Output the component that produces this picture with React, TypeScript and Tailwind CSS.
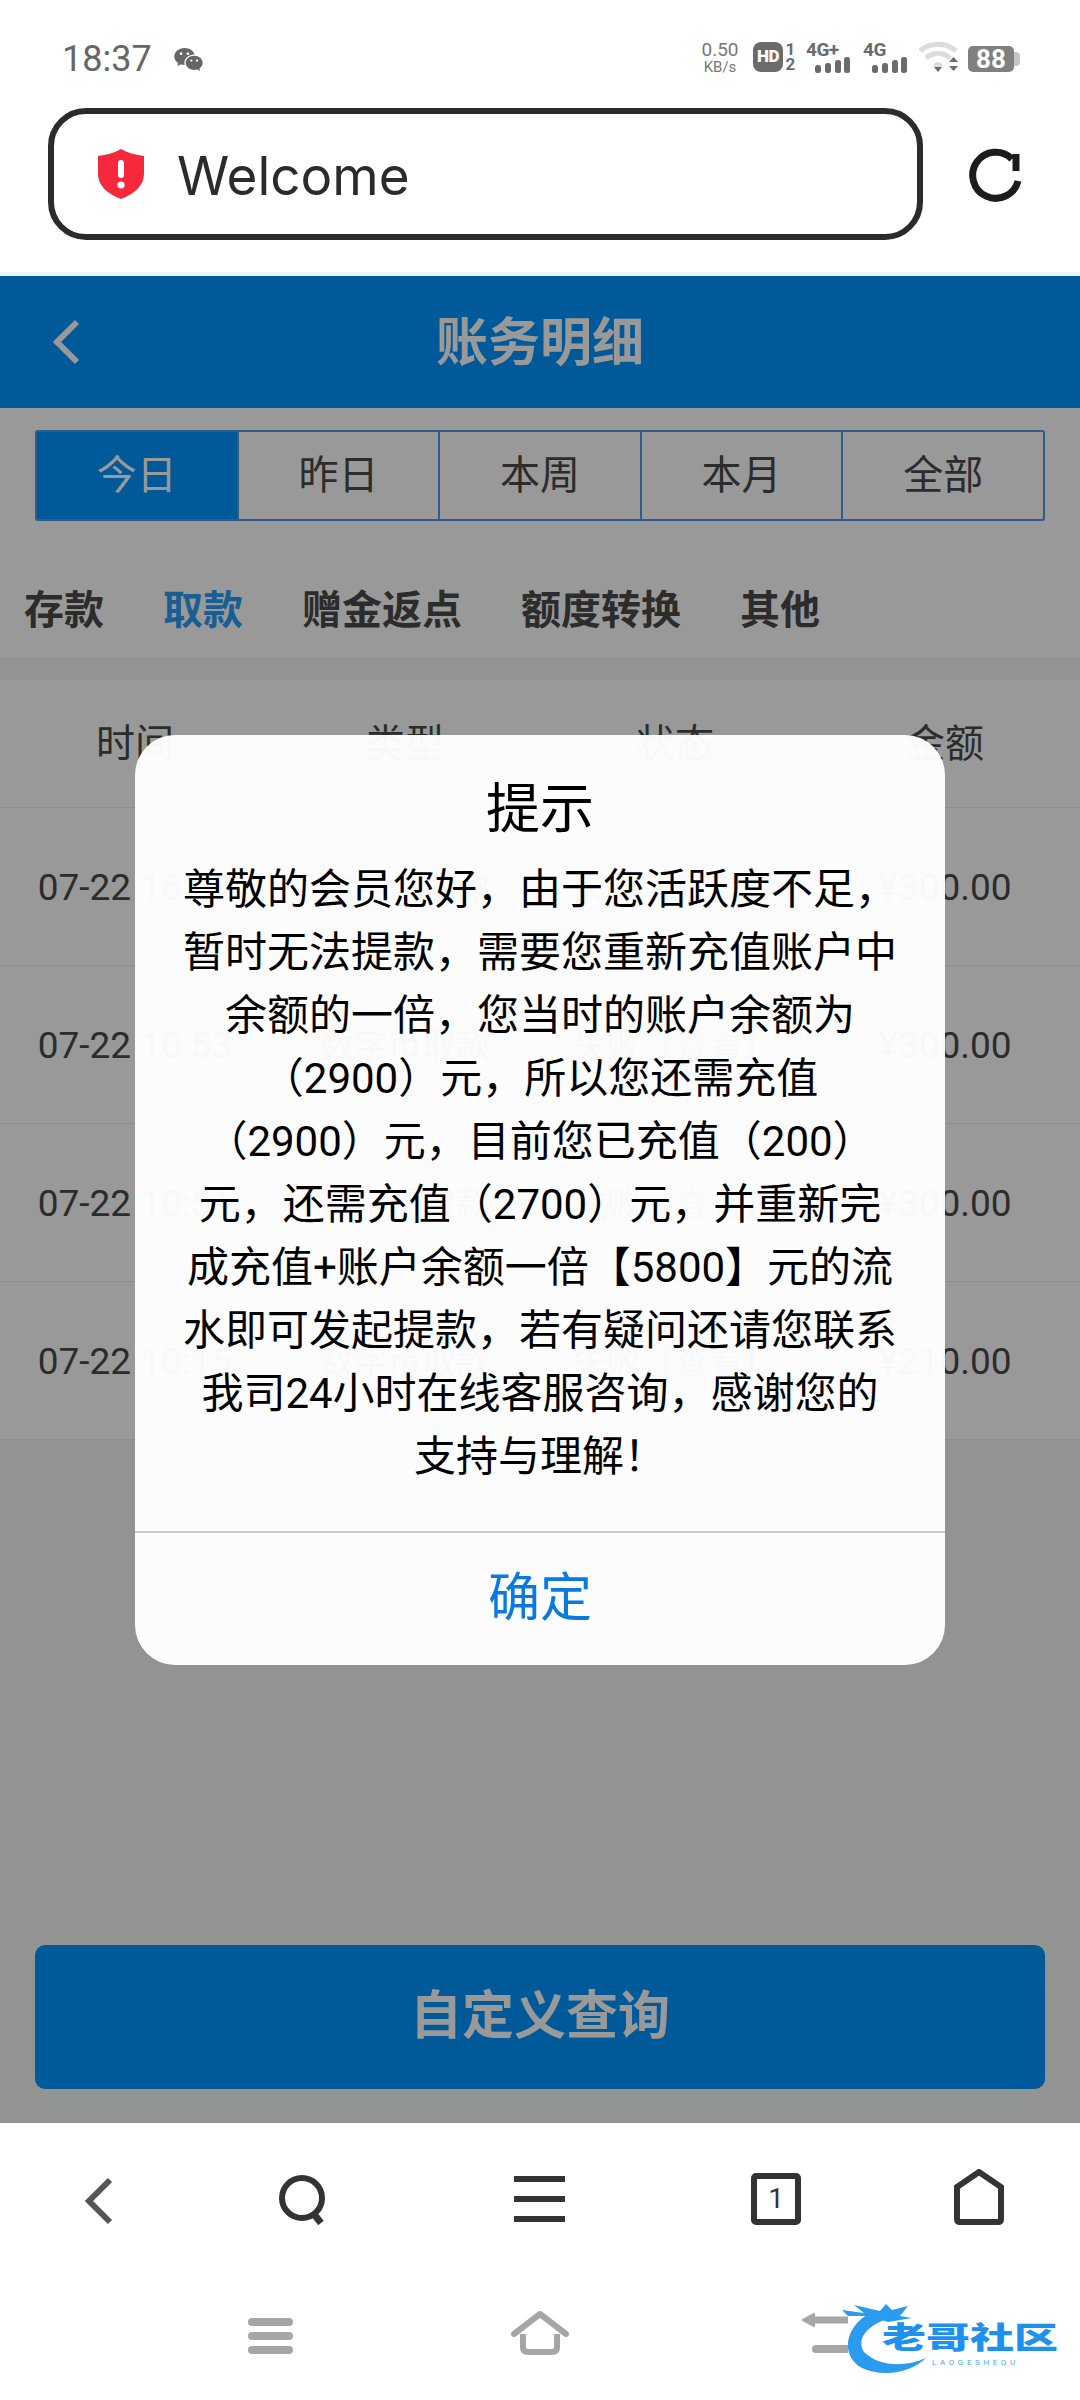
import React from "react";
import { RiWechatFill } from "react-icons/ri";

const ranges = ["今日", "昨日", "本周", "本月", "全部"];
const kinds = ["存款", "取款", "赠金返点", "额度转换", "其他"];
const columns = ["时间", "类型", "状态", "金额"];

const records = [
  { time: "07-22 16:08", amount: "¥300.00" },
  { time: "07-22 10:53", amount: "¥300.00" },
  { time: "07-22 10:51", amount: "¥300.00" },
  { time: "07-22 10:15", amount: "¥210.00" },
];

const notice = [
  "尊敬的会员您好，由于您活跃度不足，",
  "暂时无法提款，需要您重新充值账户中",
  "余额的一倍，您当时的账户余额为",
  "（2900）元，所以您还需充值",
  "（2900）元，目前您已充值（200）",
  "元，还需充值（2700）元，并重新完",
  "成充值+账户余额一倍【5800】元的流",
  "水即可发起提款，若有疑问还请您联系",
  "我司24小时在线客服咨询，感谢您的",
  "支持与理解！",
];

const SignalBars = () => (
  <svg width="35" height="16" viewBox="0 0 35 16" fill="#6b6b6b">
    <rect x="0" y="8" width="6" height="8" rx="2.5" />
    <rect x="10" y="6" width="6" height="10" rx="2.5" />
    <rect x="20" y="3" width="6" height="13" rx="2.5" />
    <rect x="29" y="0" width="6" height="16" rx="2.5" />
  </svg>
);

const Cellular = ({ label }: { label: string }) => (
  <div className="flex w-[44px] flex-col">
    <span className="h-[16px] text-[19px] leading-[16px] font-bold tracking-[-0.5px] text-[#6b6b6b]">{label}</span>
    <div className="mt-[-1px] ml-[9px]">
      <SignalBars />
    </div>
  </div>
);

const StatusBar = () => (
  <div className="flex h-[108px] justify-between pt-[42px] pr-[60px] pl-[62px]">
    <div className="flex h-[34px] items-center">
      <span className="text-[36px] leading-[34px] text-[#666666]">18:37</span>
      <RiWechatFill className="ml-[21px] h-[31px] w-[31px] text-[#666666]" />
    </div>
    <div className="flex h-[32px] items-start">
      <div className="flex w-[40px] flex-col items-center text-[#777777]">
        <span className="text-[19px] leading-[16px]">0.50</span>
        <span className="mt-[2px] text-[15px] leading-[14px]">KB/s</span>
      </div>
      <div className="ml-[13px] flex h-[30px] w-[30px] items-center justify-center rounded-[8px] bg-[#6b6b6b] text-[17px] font-black tracking-[-0.5px] text-white">
        HD
      </div>
      <div className="ml-[2px] flex w-[11px] flex-col items-center text-[17px] leading-[15px] font-bold text-[#6b6b6b]">
        <span>1</span>
        <span>2</span>
      </div>
      <div className="ml-[10px]">
        <Cellular label="4G+" />
      </div>
      <div className="ml-[13px]">
        <Cellular label="4G" />
      </div>
      <svg className="ml-[12px]" width="40" height="32" viewBox="0 0 40 32" fill="none">
        <path d="M1 9 C 11 0 27 0 37 9" stroke="#dcdcdc" strokeWidth="5" />
        <path d="M7 16 C 14 10 24 10 31 16" stroke="#dcdcdc" strokeWidth="5" />
        <path d="M14 23 C 17 19 21 19 24 23 L19 29 Z" fill="#dcdcdc" />
        <path d="M15 25 H23 L19 30 Z" fill="#6b6b6b" />
        <path d="M30 20 L34.5 15 L39 20 Z M30 24 H39 L34.5 29 Z" fill="#6b6b6b" />
      </svg>
      <div className="mt-[4px] ml-[9px] flex items-center">
        <div className="flex h-[26px] w-[46px] items-center justify-center rounded-[5px] bg-[#808080] text-[26px] font-bold text-white">
          88
        </div>
        <div className="h-[14px] w-[6px] rounded-r-[4px] bg-[#c6c6c6]" />
      </div>
    </div>
  </div>
);

const AddressBar = () => (
  <div className="flex h-[164px] items-start pl-[48px]">
    <div className="flex h-[132px] w-[875px] items-center rounded-[38px] border-[6px] border-[#2b2b2b] pl-[44px]">
      <svg width="46" height="50" viewBox="0 0 46 50">
        <path
          d="M23 0 C 30 4 38 6 46 7 V 25 C 46 37 36 45 23 50 C 10 45 0 37 0 25 V 7 C 8 6 16 4 23 0 Z"
          fill="#f5283c"
        />
        <rect x="20" y="11" width="6" height="18" rx="3" fill="#ffffff" />
        <circle cx="23" cy="36" r="3.6" fill="#ffffff" />
      </svg>
      <span className="mt-[4px] ml-[33px] font-[Inter,sans-serif] text-[53px] leading-none text-[#2b2b2b]">Welcome</span>
    </div>
    <svg className="mt-[39px] ml-[42px]" width="60" height="60" viewBox="0 0 60 60" fill="none">
      <path d="M53 34 A 23 23 0 1 1 47 12" stroke="#1c1c1c" strokeWidth="7" />
      <path d="M51 7 V 24" stroke="#1c1c1c" strokeWidth="7" />
    </svg>
  </div>
);

const WithdrawalTable = () => (
  <div className="bg-white">
    <div className="grid h-[128px] grid-cols-4 items-center border-b border-[#eeeeee] pt-[2px] text-center text-[39px] text-[#4a4a4a]">
      {columns.map((name) => (
        <span key={name}>{name}</span>
      ))}
    </div>
    {records.map((record) => (
      <div
        key={record.time}
        className="grid h-[158px] grid-cols-4 items-center border-b border-[#eeeeee] pt-[3px] text-center text-[#4a4a4a]"
      >
        <span className="text-[37px] whitespace-nowrap">{record.time}</span>
        <span className="text-[34px]">数字币取款</span>
        <span className="text-[34px] whitespace-nowrap">
          失败<span className="text-[#0096ff]">【查看】</span>
        </span>
        <span className="text-[37px]">{record.amount}</span>
      </div>
    ))}
  </div>
);

const NoticeDialog = () => (
  <div className="absolute inset-0 flex items-center justify-center bg-black/40">
    <div className="w-[810px] rounded-[40px] bg-white/97 text-center text-black">
      <h2 className="pt-[40px] text-[54px] leading-[70px] font-normal">提示</h2>
      <div className="mt-[13px] pb-[43px] text-[42px] leading-[63px]">
        {notice.map((line) => (
          <p key={line} className="whitespace-nowrap">
            {line}
          </p>
        ))}
      </div>
      <div className="flex h-[134px] items-center justify-center border-t-2 border-[#c9c9c9] text-[52px] text-[#0a7ae0]">
        确定
      </div>
    </div>
  </div>
);

const WebPage = () => (
  <div className="relative flex flex-1 flex-col bg-[#f3f7f5]">
    <div className="relative flex h-[132px] items-center justify-center bg-[#0096ff] pt-[4px] text-[52px] font-bold text-white">
      <svg className="absolute top-[42px] left-[50px]" width="32" height="48" viewBox="0 0 32 48" fill="none">
        <path d="M27 4 L7 24 L27 44" stroke="#ffffff" strokeWidth="6" />
      </svg>
      账务明细
    </div>
    <div className="h-[249px] bg-white pt-[22px]">
      <div className="mx-[35px] flex h-[91px] w-[1010px] overflow-hidden rounded-[3px] border-2 border-[#4f9be6] text-[40px] text-[#4a4a4a]">
        {ranges.map((range, i) => (
          <div
            key={range}
            className={
              i === 0
                ? "flex flex-1 items-center justify-center bg-[#0096ff] text-white"
                : "flex flex-1 items-center justify-center border-l-2 border-[#4f9be6]"
            }
          >
            {range}
          </div>
        ))}
      </div>
      <div className="mt-[68px] flex gap-[59px] pl-[24px] text-[40px] leading-[44px] font-bold text-[#4a4a4a]">
        {kinds.map((kind, i) => (
          <span key={kind} className={i === 1 ? "text-[#2a9df4]" : ""}>
            {kind}
          </span>
        ))}
      </div>
    </div>
    <div className="h-[23px]" />
    <WithdrawalTable />
    <div className="flex flex-1 flex-col justify-end pr-[35px] pb-[34px] pl-[35px]">
      <div className="flex h-[144px] w-[1010px] items-center justify-center rounded-[10px] bg-[#0096ff] text-[52px] font-bold text-white">
        自定义查询
      </div>
    </div>
    <NoticeDialog />
  </div>
);

const BrowserToolbar = () => (
  <div className="flex h-[56px] items-end">
    <svg className="ml-[84px]" width="30" height="48" viewBox="0 0 30 48" fill="none">
      <path d="M26 3 L5 24 L26 45" stroke="#555555" strokeWidth="6" />
    </svg>
    <svg className="ml-[165px]" width="50" height="52" viewBox="0 0 50 52" fill="none">
      <circle cx="23" cy="25" r="20" stroke="#333333" strokeWidth="6" />
      <path d="M34 40 L42 50" stroke="#333333" strokeWidth="7" />
    </svg>
    <div className="mb-[3px] ml-[185px] flex h-[46px] w-[51px] flex-col justify-between">
      <div className="h-[6px] bg-[#333333]" />
      <div className="h-[6px] bg-[#333333]" />
      <div className="h-[6px] bg-[#333333]" />
    </div>
    <div className="ml-[186px] flex h-[52px] w-[50px] items-center justify-center rounded-[5px] border-[6px] border-[#333333] text-[28px] leading-none font-normal text-[#333333]">
      1
    </div>
    <svg className="ml-[153px]" width="50" height="56" viewBox="0 0 50 56" fill="none">
      <path d="M3 18 L25 3 L47 18 V 50 Q 47 53 44 53 H 6 Q 3 53 3 50 Z" stroke="#333333" strokeWidth="6" />
    </svg>
  </div>
);

const SystemNav = () => (
  <div className="mt-[87px] flex h-[43px] items-end">
    <div className="mb-[1px] ml-[248px] flex h-[36px] w-[45px] flex-col justify-between">
      <div className="h-[8px] rounded-[4px] bg-[#a6a6a6]" />
      <div className="h-[8px] rounded-[4px] bg-[#a6a6a6]" />
      <div className="h-[8px] rounded-[4px] bg-[#a6a6a6]" />
    </div>
    <svg className="ml-[218px]" width="58" height="44" viewBox="0 0 58 44" fill="none">
      <path d="M3 23 L29 3 L55 23" stroke="#a6a6a6" strokeWidth="6" strokeLinecap="round" strokeLinejoin="round" />
      <path d="M12 23 V 36 Q 12 41 17 41 H 41 Q 46 41 46 36 V 23" stroke="#a6a6a6" strokeWidth="6" />
    </svg>
    <svg className="ml-[233px]" width="46" height="44" viewBox="0 0 46 44" fill="none">
      <path d="M1 9 L12 3 V 15 Z" fill="#a6a6a6" stroke="#a6a6a6" strokeWidth="2" strokeLinejoin="round" />
      <path d="M12 9 H 46" stroke="#a6a6a6" strokeWidth="7" />
      <path d="M14 38 H 46" stroke="#a6a6a6" strokeWidth="8" strokeLinecap="round" />
    </svg>
  </div>
);

// community stamp that sits over the corner of the nav bar
const CommunityBadge = () => (
  <div className="absolute right-[16px] bottom-[26px] h-[72px] w-[222px]">
    <svg className="absolute top-0 left-0" width="100" height="72" viewBox="0 0 100 72">
      <path d="M30 10 C 2 24 -2 54 20 66 C 42 76 70 70 84 56 C 62 66 36 64 22 50 C 14 38 24 22 52 15 Z" fill="#2a9bef" />
      <path d="M0 8 L22 11 L12 3 L38 9 L44 2 L50 8 L66 4 L58 14 L70 16 L46 20 L26 14 L6 14 Z" fill="#2a9bef" />
    </svg>
    <span className="absolute top-[14px] left-[40px] origin-left scale-y-[0.68] text-[44px] leading-[44px] font-black whitespace-nowrap text-[#1e90ee]">
      老哥社区
    </span>
    <span className="absolute top-[56px] left-[90px] text-[8px] leading-[10px] tracking-[3.6px] whitespace-nowrap text-[#4aa8f0]">
      LAOGESHEQU
    </span>
  </div>
);

export default function App() {
  return (
    <div
      lang="zh-CN"
      className="relative flex h-[2400px] w-[1080px] flex-col overflow-hidden bg-white font-[Roboto,'Noto_Sans_CJK_SC',sans-serif]"
    >
      <StatusBar />
      <AddressBar />
      <div className="h-[4px] bg-[#e8f4fa]" />
      <WebPage />
      <div className="h-[277px] pt-[46px]">
        <BrowserToolbar />
        <SystemNav />
      </div>
      <CommunityBadge />
    </div>
  );
}
